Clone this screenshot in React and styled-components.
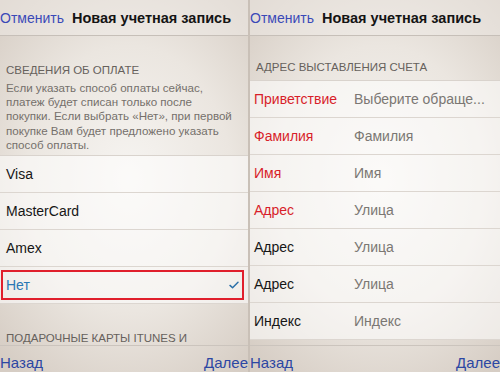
import React from 'react'
import styled, { createGlobalStyle } from 'styled-components'

const GlobalStyle = createGlobalStyle`
	body {
		margin: 0;
		font-family: 'Liberation Sans', Arial, sans-serif;
		background: #cfc6bd;
	}
`

const paymentFooter = [
	'Если указать способ оплаты сейчас,',
	'платеж будет списан только после',
	'покупки. Если выбрать «Нет», при первой',
	'покупке Вам будет предложено указать',
	'способ оплаты.',
]

const cards = ['Visa', 'MasterCard', 'Amex']

const billing = [
	{ label: 'Приветствие', value: 'Выберите обраще...', required: true },
	{ label: 'Фамилия', value: 'Фамилия', required: true },
	{ label: 'Имя', value: 'Имя', required: true },
	{ label: 'Адрес', value: 'Улица', required: true },
	{ label: 'Адрес', value: 'Улица' },
	{ label: 'Адрес', value: 'Улица' },
	{ label: 'Индекс', value: 'Индекс' },
]

const App = () => {
	return (
		<>
			<GlobalStyle />
			<Page>
				<Screen $width={248}>
					<NavBar>
						<NavLink>Отменить</NavLink>
						<NavTitle>Новая учетная запись</NavTitle>
					</NavBar>
					<Content>
						<GroupHeader $top={27}>Сведения об оплате</GroupHeader>
						<GroupFooter>
							{paymentFooter.map((line) => (
								<div key={line}>{line}</div>
							))}
						</GroupFooter>
						<List>
							{cards.map((card) => (
								<Row key={card}>
									<RowText>{card}</RowText>
								</Row>
							))}
							<Row $highlight>
								<Highlight>
									<RowText $selected>Нет</RowText>
									<Check viewBox="0 0 12 10">
										<path d="M1 5.5 L4.2 8.5 L11 1.5" />
									</Check>
								</Highlight>
							</Row>
						</List>
						<GroupHeader $top={27}>Подарочные карты iTunes и</GroupHeader>
					</Content>
					<Toolbar>
						<ToolbarLink>Назад</ToolbarLink>
						<ToolbarLink>Далее</ToolbarLink>
					</Toolbar>
				</Screen>
				<Divider />
				<Screen $width={250}>
					<NavBar>
						<NavLink>Отменить</NavLink>
						<NavTitle>Новая учетная запись</NavTitle>
					</NavBar>
					<Content>
						<GroupHeader $top={24} $bottom={6}>
							Адрес выставления счета
						</GroupHeader>
						<List>
							{billing.map((field, i) => (
								<Row key={i}>
									<FieldLabel $required={field.required}>{field.label}</FieldLabel>
									<FieldValue>{field.value}</FieldValue>
								</Row>
							))}
						</List>
					</Content>
					<Toolbar>
						<ToolbarLink>Назад</ToolbarLink>
						<ToolbarLink>Далее</ToolbarLink>
					</Toolbar>
				</Screen>
			</Page>
		</>
	)
}

export default App

const Page = styled.div`
	display: flex;
	width: 500px;
	height: 372px;
	overflow: hidden;
`

const Screen = styled.div`
	width: ${(p) => p.$width}px;
	flex-shrink: 0;
	height: 372px;
	display: flex;
	flex-direction: column;
	overflow: hidden;
	background: radial-gradient(
		ellipse 75% 65% at 52% 48%,
		#f6f4f1 0%,
		#ebe6e0 55%,
		#d6cdc4 100%
	);
`

const Divider = styled.div`
	width: 2px;
	flex-shrink: 0;
	background: #c9c0b7;
`

const NavBar = styled.div`
	height: 35px;
	display: flex;
	align-items: center;
	gap: 8px;
	border-bottom: 1px solid #c6bfb8;
	white-space: nowrap;
	background: rgba(240, 236, 231, 0.5);
`

const NavLink = styled.span`
	font-size: 14px;
	color: #3a49b8;
`

const NavTitle = styled.span`
	font-size: 14.5px;
	font-weight: bold;
	color: #141414;
`

const Content = styled.div`
	flex: 1;
	display: flex;
	flex-direction: column;
	min-height: 0;
`

const GroupHeader = styled.div`
	padding: ${(p) => p.$top}px 6px ${(p) => p.$bottom || 0}px;
	font-size: 11.5px;
	line-height: 14px;
	text-transform: uppercase;
	color: #66615c;
	white-space: nowrap;
`

const GroupFooter = styled.div`
	padding: 4px 6px 3px;
	font-size: 11.6px;
	line-height: 14.2px;
	color: #75706b;
	white-space: nowrap;
`

const List = styled.div`
	border-top: 1px solid #d9d3cd;
	background: rgba(255, 255, 255, 0.55);
`

const Row = styled.div`
	height: 37px;
	box-sizing: border-box;
	display: flex;
	align-items: center;
	padding: ${(p) => (p.$highlight ? '3px 4px 3px 1px' : '0 6px 0 4px')};
	border-bottom: 1px solid #dcd6d0;
	white-space: nowrap;
`

const Highlight = styled.div`
	flex: 1;
	align-self: stretch;
	display: flex;
	align-items: center;
	justify-content: space-between;
	padding: 0 3px 0 3px;
	border: 2px solid #e01f2c;
`

const RowText = styled.span`
	font-size: 14px;
	padding-left: ${(p) => (p.$selected ? 0 : 2)}px;
	color: ${(p) => (p.$selected ? '#2a78b4' : '#161616')};
`

const Check = styled.svg`
	width: 10px;
	height: 8px;
	fill: none;
	stroke: #2a6fa8;
	stroke-width: 1.8;
	stroke-linecap: round;
	stroke-linejoin: round;
`

const FieldLabel = styled.span`
	width: 100px;
	flex-shrink: 0;
	font-size: 14px;
	color: ${(p) => (p.$required ? '#d81e2a' : '#161616')};
`

const FieldValue = styled.span`
	font-size: 14px;
	color: #7b7773;
`

const Toolbar = styled.div`
	height: 27px;
	flex-shrink: 0;
	box-sizing: border-box;
	display: flex;
	justify-content: space-between;
	align-items: flex-end;
	border-top: 1px solid #cbc4bd;
	white-space: nowrap;
`

const ToolbarLink = styled.span`
	font-size: 15px;
	line-height: 17px;
	margin-bottom: 1px;
	color: #2c47a3;
`
